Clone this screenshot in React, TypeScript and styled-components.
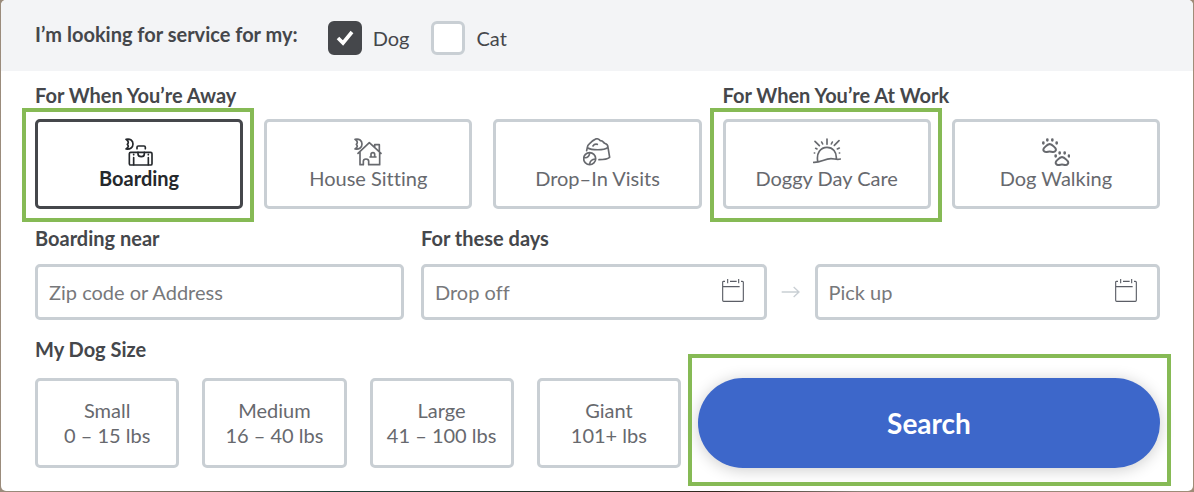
import React, { useState } from "react";
import styled, { createGlobalStyle } from "styled-components";

const color = {
  ink: "#45474b",
  strong: "#25282c",
  muted: "#67696e",
  line: "#c9cfd4",
  blue: "#3d67ca",
  green: "#86ba55",
  band: "#f3f4f6",
};

const GlobalStyle = createGlobalStyle`
  * { box-sizing: border-box; }
  body {
    margin: 0;
    background: linear-gradient(90deg, #9b8c7c 0%, #6f6658 18%, #1f4038 28%, #33281f 60%, #8b8178 72%, #a08c78 100%);
    color: ${color.ink};
    font: 20px/24px Lato, "Liberation Sans", sans-serif;
    font-variant-ligatures: none;
  }
  button, input { font: inherit; font-variant-ligatures: none; color: inherit; }
`;

const Card = styled.form`
  margin: 0 1px 1px;
  background: #fff;
  border-radius: 5px;
  overflow: hidden;
`;

const PetBar = styled.fieldset`
  display: flex;
  align-items: flex-start;
  gap: 30px;
  margin: 0;
  border: 0;
  padding: 21px 34px 16px;
  background: ${color.band};
`;

const PetTitle = styled.span`
  padding: 1px 0;
  font-weight: 700;
`;

const PetOptions = styled.div`
  display: flex;
  gap: 22px;
`;

const CheckLabel = styled.label`
  display: flex;
  align-items: center;
  gap: 11px;
`;

const CheckBox = styled.span`
  position: relative;
  display: flex;
  svg {
    position: absolute;
    inset: 0;
    pointer-events: none;
  }
`;

const CheckInput = styled.input`
  appearance: none;
  width: 34px;
  height: 34px;
  margin: 0;
  border: 3px solid ${color.line};
  border-radius: 6px;
  background: #fff;
  &:checked {
    border-color: ${color.ink};
    background: ${color.ink};
  }
`;

const Body = styled.div`
  display: grid;
  gap: 17px;
  padding: 12px 33px 23px 34px;
`;

const Services = styled.div`
  display: grid;
  grid-template-columns: repeat(5, minmax(0, 1fr));
  column-gap: 21px;
`;

const ServiceGroup = styled.section<{ $span: number }>`
  grid-column: span ${(p) => p.$span};
  display: grid;
  grid-template-columns: subgrid;
  row-gap: 12px;
`;

const Heading = styled.h2`
  grid-column: 1 / -1;
  margin: 0;
  font-size: 20px;
  line-height: 24px;
  font-weight: 700;
`;

const Marked = styled.div`
  position: relative;
  display: grid;
`;

const Mark = styled.span<{ $inset: string }>`
  position: absolute;
  inset: ${(p) => p.$inset};
  border: 4px solid ${color.green};
  pointer-events: none;
`;

const Choice = styled.button<{ $active?: boolean }>`
  display: flex;
  flex-direction: column;
  align-items: center;
  justify-content: center;
  min-height: 90px;
  padding: 0;
  border: 3px solid ${(p) => (p.$active ? color.ink : color.line)};
  border-radius: 5px;
  background: #fff;
  color: ${(p) => (p.$active ? color.strong : color.muted)};
  font-weight: ${(p) => (p.$active ? 700 : 400)};
  line-height: 25px;
  white-space: nowrap;
`;

const ServiceIcon = styled.svg`
  width: 28px;
  height: 28px;
  fill: none;
  stroke: currentColor;
  stroke-width: 5;
  stroke-linecap: round;
  stroke-linejoin: round;
`;

const Fields = styled.div`
  display: grid;
  grid-template-columns: 369fr 739fr;
  column-gap: 17px;
`;

const Field = styled.div`
  display: grid;
  row-gap: 14px;
`;

const Label = styled.label`
  font-weight: 700;
`;

const Dates = styled.div`
  display: flex;
  align-items: center;
  gap: 14px;
`;

const InputWrap = styled.div`
  position: relative;
  flex: 1;
  svg {
    position: absolute;
    right: 23px;
    top: 15px;
    pointer-events: none;
  }
`;

const TextInput = styled.input`
  display: block;
  width: 100%;
  height: 56px;
  padding: 0 11px;
  border: 3px solid ${color.line};
  border-radius: 5px;
  background: #fff;
  &::placeholder {
    color: #77787b;
    opacity: 1;
  }
`;

const Footer = styled.div`
  display: grid;
  grid-template-columns: 646fr 462fr;
  column-gap: 17px;
  align-items: end;
`;

const SizeGroup = styled.section`
  display: grid;
  grid-template-columns: repeat(4, minmax(0, 1fr));
  gap: 17px 23px;
`;

const SearchButton = styled.button`
  height: 90px;
  border: 0;
  border-radius: 45px;
  background: ${color.blue};
  box-shadow: 0 2px 16px rgba(0, 0, 0, 0.2);
  color: #fff;
  font-size: 28px;
  font-weight: 700;
`;

const Moon = () => (
  <path d="M3 4C16 1 24 8 24 18C24 28 16 35 3 33C10 29 12 24 7 19C12 14 10 8 3 4Z" />
);

const icons = {
  boarding: (
    <>
      <Moon />
      <rect x="13" y="43" width="68" height="38" rx="4" />
      <path d="M36 32V28Q36 24 40 24H57Q61 24 61 28V32M39 43V48Q39 56 49 56Q58 56 58 48V43M26 49V50M26 59V80M70 49V50M70 59V80" />
    </>
  ),
  house: (
    <>
      <Moon />
      <path d="M12 46L46 14L81 46M18 42V80H28V70Q28 63 36 63Q44 63 44 70V80H77V42M62 27V20H76V40M51 56V49Q51 44 57 44Q62 44 62 49V56M48 57H66" />
    </>
  ),
  bowl: (
    <>
      <circle cx="20" cy="62" r="18" />
      <path d="M11 38L13 28C13 20 21 17 25 12C30 6 33 7 36 4C42 0 49 4 52 8C60 8 61 13 65 16C71 18 75 22 75 28C62 38 26 37 13 29M75 28L80 58C74 63 62 65 48 65M30 24Q34 17 43 19M4 59C12 60 18 56 20 46M20 78C21 69 27 64 37 63" />
    </>
  ),
  sun: (
    <path d="M2 73C24 74 34 62 54 62C64 62 72 66 82 63M14 69C10 46 22 28 42 28C60 28 71 42 70 61M42 3V19M6 10L19 23M78 8L64 22M26 12L29 18M58 12L55 18M8 31L12 33M4 45H5M73 33L79 30M79 45H80" />
  ),
  paws: (
    <>
      {[[0, 0], [37, 39]].map(([x, y]) => (
        <g key={x} transform={`translate(${x} ${y})`}>
          <path strokeWidth="6" d="M23 18C15 19 12 25 7 29C1 36 5 43 14 42C20 40 26 40 32 42C40 43 45 36 39 29C34 25 31 19 23 18Z" />
          <path strokeWidth="8" d="M4 14V16M16 5V7M31 5V7M44 14V16" />
        </g>
      ))}
    </>
  ),
};

const CalendarIcon = () => (
  <svg width="22" height="23" viewBox="0 0 66 69" fill="none" stroke="#5b5e66" strokeWidth="3.4" aria-hidden="true">
    <path d="M9 7H4Q2 7 2 10V64Q2 67 5 67H61Q64 67 64 64V10Q64 7 61 7H57M17 0V13M50 0V13M24 7H44M2 23H53" />
  </svg>
);

const ArrowIcon = () => (
  <svg width="20" height="12" viewBox="0 0 60 36" fill="none" stroke={color.line} strokeWidth="4" aria-hidden="true">
    <path d="M2 18H54M38 3L54 18L38 33" />
  </svg>
);

type IconName = keyof typeof icons;
type Service = { name: string; icon: IconName; marked?: boolean };

const groups: { title: string; services: Service[] }[] = [
  {
    title: "For When You’re Away",
    services: [
      { name: "Boarding", icon: "boarding", marked: true },
      { name: "House Sitting", icon: "house" },
      { name: "Drop–In Visits", icon: "bowl" },
    ],
  },
  {
    title: "For When You’re At Work",
    services: [
      { name: "Doggy Day Care", icon: "sun", marked: true },
      { name: "Dog Walking", icon: "paws" },
    ],
  },
];

const sizes = [
  ["Small", "0 – 15 lbs"],
  ["Medium", "16 – 40 lbs"],
  ["Large", "41 – 100 lbs"],
  ["Giant", "101+ lbs"],
];

export default function App() {
  const [pets, setPets] = useState<Record<string, boolean>>({ Dog: true, Cat: false });
  const [service, setService] = useState("Boarding");
  const [size, setSize] = useState("");

  return (
    <>
      <GlobalStyle />
      <Card onSubmit={(e) => e.preventDefault()}>
        <PetBar aria-labelledby="pet-title">
          <PetTitle id="pet-title">I’m looking for service for my:</PetTitle>
          <PetOptions>
            {Object.keys(pets).map((pet) => (
              <CheckLabel key={pet}>
                <CheckBox>
                  <CheckInput
                    type="checkbox"
                    checked={pets[pet]}
                    onChange={() => setPets({ ...pets, [pet]: !pets[pet] })}
                  />
                  {pets[pet] && (
                    <svg width="34" height="34" viewBox="0 0 34 34" fill="none" stroke="#fff" strokeWidth="3.6" aria-hidden="true">
                      <path d="M10 17L15 22L24 11" />
                    </svg>
                  )}
                </CheckBox>
                {pet}
              </CheckLabel>
            ))}
          </PetOptions>
        </PetBar>
        <Body>
          <Services>
            {groups.map((group) => (
              <ServiceGroup key={group.title} $span={group.services.length}>
                <Heading>{group.title}</Heading>
                {group.services.map(({ name, icon, marked }) => (
                  <Marked key={name}>
                    <Choice
                      type="button"
                      $active={service === name}
                      aria-pressed={service === name}
                      onClick={() => setService(name)}
                    >
                      <ServiceIcon viewBox="0 0 84 84" aria-hidden="true">{icons[icon]}</ServiceIcon>
                      {name}
                    </Choice>
                    {marked && <Mark $inset="-11px -11px -13px -13px" />}
                  </Marked>
                ))}
              </ServiceGroup>
            ))}
          </Services>
          <Fields>
            <Field>
              <Label htmlFor="near">Boarding near</Label>
              <TextInput id="near" placeholder="Zip code or Address" />
            </Field>
            <Field>
              <Label htmlFor="drop-off">For these days</Label>
              <Dates>
                <InputWrap>
                  <TextInput id="drop-off" placeholder="Drop off" />
                  <CalendarIcon />
                </InputWrap>
                <ArrowIcon />
                <InputWrap>
                  <TextInput aria-label="Pick up" placeholder="Pick up" />
                  <CalendarIcon />
                </InputWrap>
              </Dates>
            </Field>
          </Fields>
          <Footer>
            <SizeGroup>
              <Heading>My Dog Size</Heading>
              {sizes.map(([name, range]) => (
                <Choice
                  key={name}
                  type="button"
                  $active={size === name}
                  aria-pressed={size === name}
                  onClick={() => setSize(name)}
                >
                  <span>{name}</span>
                  <span>{range}</span>
                </Choice>
              ))}
            </SizeGroup>
            <Marked>
              <SearchButton type="submit">Search</SearchButton>
              <Mark $inset="-24px -11px -18px -10px" />
            </Marked>
          </Footer>
        </Body>
      </Card>
    </>
  );
}
